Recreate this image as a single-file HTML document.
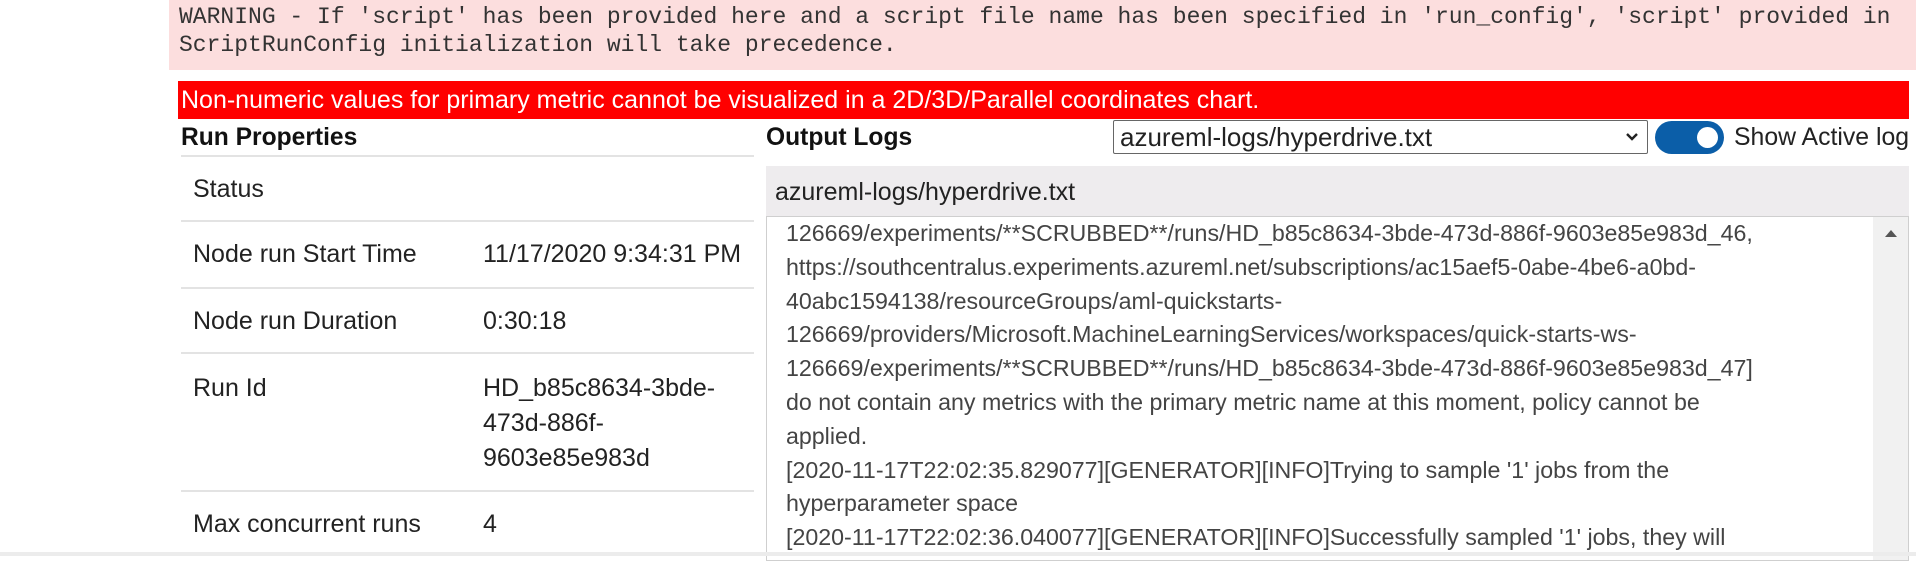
<!DOCTYPE html>
<html><head><meta charset="utf-8"><style>
*{margin:0;padding:0;box-sizing:border-box}
body{width:1916px;height:556px;overflow:hidden;background:#fff;position:relative;font-family:"Liberation Sans",Arial,sans-serif;color:#222}
.a{position:absolute;white-space:nowrap;line-height:34px}
.warn{left:169px;top:0;width:1747px;height:70px;background:#fcdede}
.wt{font-family:"Liberation Mono",monospace;font-size:23px;color:#333;line-height:28px;left:179px;top:3px}
.red{left:178px;top:81px;width:1731px;height:38px;background:#ff0000;color:#fff;font-size:25px;line-height:38px;padding-left:3px}
.h{font-weight:bold;font-size:24.6px;color:#111}
.line{position:absolute;left:181px;width:573px;height:2px;background:#e3e3e3}
.lbl{font-size:25px;color:#222}
.log{left:766px;top:216px;width:1143px;height:345px;border:1px solid #cfcfcf;background:#fff;overflow:hidden}
.lt{position:absolute;left:19px;top:0;font-size:23.2px;color:#444;line-height:33.8px;white-space:nowrap}
</style></head><body>
<div class="a warn"></div>
<div class="a wt">WARNING - If 'script' has been provided here and a script file name has been specified in 'run_config', 'script' provided in<br>ScriptRunConfig initialization will take precedence.</div>
<div class="a red">Non-numeric values for primary metric cannot be visualized in a 2D/3D/Parallel coordinates chart.</div>

<div class="a h" style="left:181px;top:121px">Run Properties</div>
<div class="line" style="top:155px"></div>
<div class="a lbl" style="left:193px;top:172px">Status</div>
<div class="line" style="top:220px"></div>
<div class="a lbl" style="left:193px;top:237px">Node run Start Time</div>
<div class="a lbl" style="left:483px;top:237px">11/17/2020 9:34:31 PM</div>
<div class="line" style="top:287px"></div>
<div class="a lbl" style="left:193px;top:304px">Node run Duration</div>
<div class="a lbl" style="left:483px;top:304px">0:30:18</div>
<div class="line" style="top:352px"></div>
<div class="a lbl" style="left:193px;top:371px">Run Id</div>
<div class="a lbl" style="left:483px;top:371px;line-height:35px">HD_b85c8634-3bde-<br>473d-886f-<br>9603e85e983d</div>
<div class="line" style="top:490px"></div>
<div class="a lbl" style="left:193px;top:507px">Max concurrent runs</div>
<div class="a lbl" style="left:483px;top:507px">4</div>

<div class="a h" style="left:766px;top:121px">Output Logs</div>
<div class="a" style="left:1113px;top:120px;width:535px;height:34px;border:1px solid #666;border-radius:2px;background:#fff;font-size:26px;line-height:32px;padding-left:6px">azureml-logs/hyperdrive.txt
<svg style="position:absolute;right:8px;top:11px" width="14" height="10" viewBox="0 0 14 10"><path d="M2 2 L7 7 L12 2" stroke="#222" stroke-width="2.4" fill="none"/></svg></div>
<div class="a" style="left:1655px;top:121px;width:69px;height:33px;border-radius:17px;background:#0b5ea8">
<div style="position:absolute;right:6px;top:6px;width:21px;height:21px;border-radius:50%;background:#fff"></div></div>
<div class="a" style="left:1734px;top:121px;font-size:24.8px;color:#222">Show Active log</div>

<div class="a" style="left:766px;top:166px;width:1143px;height:50px;background:#eeecee"></div>
<div class="a" style="left:775px;top:175px;font-size:25px;color:#222">azureml-logs/hyperdrive.txt</div>

<div class="a log">
<div class="lt" style="top:0px">126669/experiments/**SCRUBBED**/runs/HD_b85c8634-3bde-473d-886f-9603e85e983d_46,<br>https://southcentralus.experiments.azureml.net/subscriptions/ac15aef5-0abe-4be6-a0bd-<br>40abc1594138/resourceGroups/aml-quickstarts-<br>126669/providers/Microsoft.MachineLearningServices/workspaces/quick-starts-ws-<br>126669/experiments/**SCRUBBED**/runs/HD_b85c8634-3bde-473d-886f-9603e85e983d_47]<br>do not contain any metrics with the primary metric name at this moment, policy cannot be<br>applied.<br>[2020-11-17T22:02:35.829077][GENERATOR][INFO]Trying to sample '1' jobs from the<br>hyperparameter space<br>[2020-11-17T22:02:36.040077][GENERATOR][INFO]Successfully sampled '1' jobs, they will</div>
<div style="position:absolute;right:0;top:0;width:35px;height:100%;background:#f1f1f1"></div>
<svg style="position:absolute;right:11px;top:12px" width="12" height="8" viewBox="0 0 12 8"><path d="M0 8 L6 1 L12 8Z" fill="#555"/></svg>
</div>
<div class="a" style="left:0;top:552px;width:1916px;height:4px;background:#ececec"></div>
</body></html>
